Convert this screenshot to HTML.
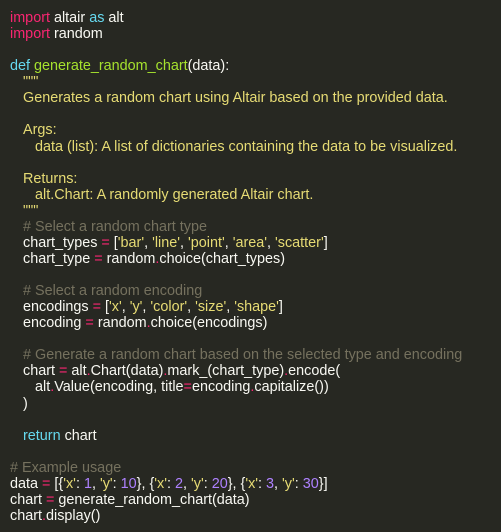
<!DOCTYPE html>
<html><head><meta charset="utf-8"><style>
html,body{margin:0;padding:0;background:#272822;width:501px;height:532px;overflow:hidden}
pre{margin:0;padding:10px 0 0 10px;font-family:"Liberation Sans",sans-serif;font-size:14.4px;line-height:16.06px;color:#f8f8f2;white-space:pre;letter-spacing:0}
.k{color:#f92672}.b{color:#66d9ef}.f{color:#a6e22e}.s{color:#e6db74}.c{color:#75715e}.n{color:#ae81ff}
.i1{padding-left:13px}.i2{padding-left:25px}
</style></head><body><pre><span class="k">import</span> altair <span class="b">as</span> alt
<span class="k">import</span> random

<span class="b">def</span> <span class="f">generate_random_chart</span>(data):
<span class="i1"><span class="s">"""</span></span>
<span class="i1"><span class="s">Generates a random chart using Altair based on the provided data.</span></span>

<span class="i1"><span class="s">Args:</span></span>
<span class="i2"><span class="s">data (list): A list of dictionaries containing the data to be visualized.</span></span>

<span class="i1"><span class="s">Returns:</span></span>
<span class="i2"><span class="s">alt.Chart: A randomly generated Altair chart.</span></span>
<span class="i1"><span class="s">"""</span></span>
<span class="i1"><span class="c"># Select a random chart type</span></span>
<span class="i1">chart_types <span class="k">=</span> [<span class="s">'bar'</span>, <span class="s">'line'</span>, <span class="s">'point'</span>, <span class="s">'area'</span>, <span class="s">'scatter'</span>]</span>
<span class="i1">chart_type <span class="k">=</span> random<span class="k">.</span>choice(chart_types)</span>

<span class="i1"><span class="c"># Select a random encoding</span></span>
<span class="i1">encodings <span class="k">=</span> [<span class="s">'x'</span>, <span class="s">'y'</span>, <span class="s">'color'</span>, <span class="s">'size'</span>, <span class="s">'shape'</span>]</span>
<span class="i1">encoding <span class="k">=</span> random<span class="k">.</span>choice(encodings)</span>

<span class="i1"><span class="c"># Generate a random chart based on the selected type and encoding</span></span>
<span class="i1">chart <span class="k">=</span> alt<span class="k">.</span>Chart(data)<span class="k">.</span>mark_(chart_type)<span class="k">.</span>encode(</span>
<span class="i2">alt<span class="k">.</span>Value(encoding, title<span class="k">=</span>encoding<span class="k">.</span>capitalize())</span>
<span class="i1">)</span>

<span class="i1"><span class="b">return</span> chart</span>

<span class="c"># Example usage</span>
data <span class="k">=</span> [{<span class="s">'x'</span>: <span class="n">1</span>, <span class="s">'y'</span>: <span class="n">10</span>}, {<span class="s">'x'</span>: <span class="n">2</span>, <span class="s">'y'</span>: <span class="n">20</span>}, {<span class="s">'x'</span>: <span class="n">3</span>, <span class="s">'y'</span>: <span class="n">30</span>}]
chart <span class="k">=</span> generate_random_chart(data)
chart<span class="k">.</span>display()</pre></body></html>
